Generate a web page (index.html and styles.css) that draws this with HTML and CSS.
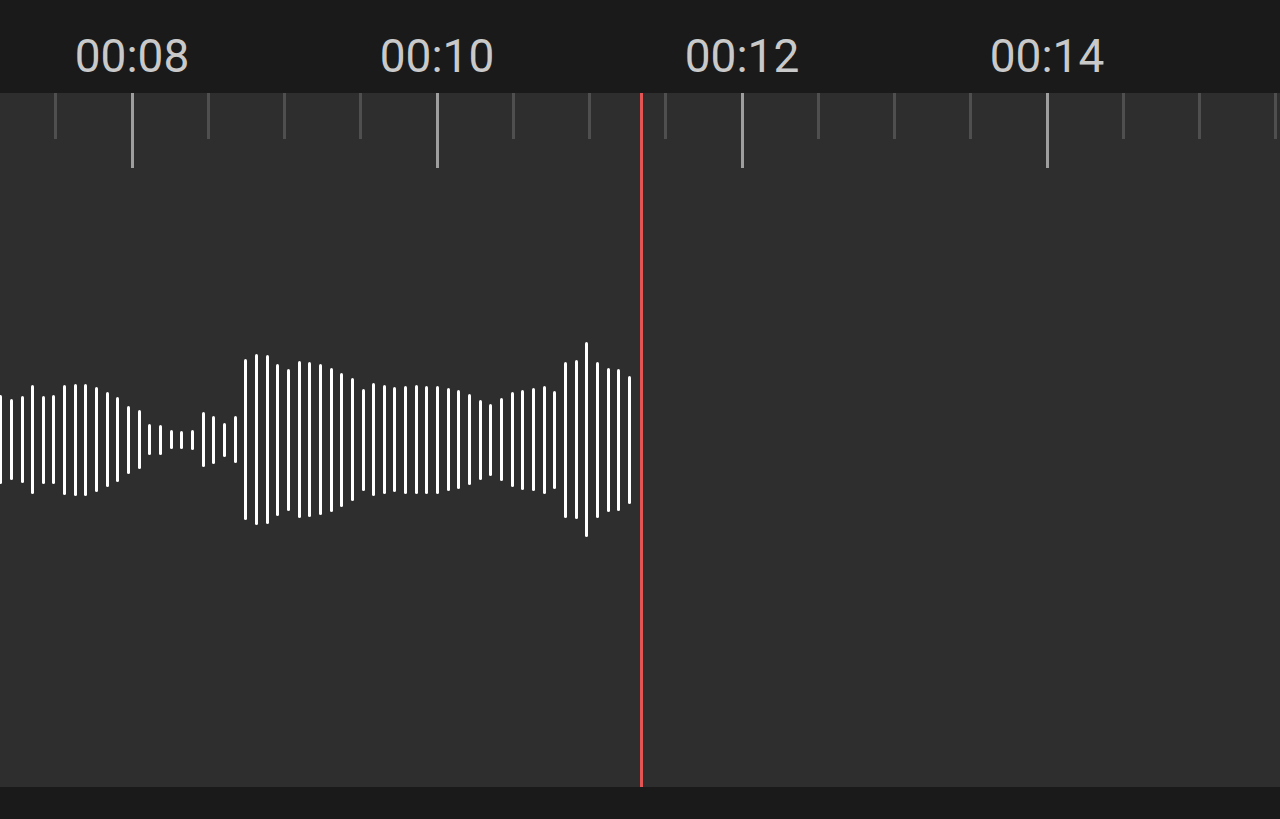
FILE: index.html
```html
<!DOCTYPE html>
<html lang="en">
<head>
    <meta charset="UTF-8">
    <meta name="viewport" content="width=device-width, initial-scale=1.0">
    <title>Recorder Timeline</title>
    <link rel="stylesheet" href="styles.css">
</head>
<body>

<div class="time-header">
    <span class="time-label">00:08</span>
    <span class="time-label">00:10</span>
    <span class="time-label">00:12</span>
    <span class="time-label">00:14</span>
</div>

<div class="timeline">
    <div class="ruler">
        <div class="tick-cell"><span class="tick"></span></div>
        <div class="tick-cell"><span class="tick major"></span></div>
        <div class="tick-cell"><span class="tick"></span></div>
        <div class="tick-cell"><span class="tick"></span></div>
        <div class="tick-cell"><span class="tick"></span></div>
        <div class="tick-cell"><span class="tick major"></span></div>
        <div class="tick-cell"><span class="tick"></span></div>
        <div class="tick-cell"><span class="tick"></span></div>
        <div class="tick-cell"><span class="tick"></span></div>
        <div class="tick-cell"><span class="tick major"></span></div>
        <div class="tick-cell"><span class="tick"></span></div>
        <div class="tick-cell"><span class="tick"></span></div>
        <div class="tick-cell"><span class="tick"></span></div>
        <div class="tick-cell"><span class="tick major"></span></div>
        <div class="tick-cell"><span class="tick"></span></div>
        <div class="tick-cell"><span class="tick"></span></div>
        <div class="tick-cell"><span class="tick"></span></div>
    </div>

    <!-- recorded amplitude, one bar per sample -->
    <div class="waveform">
        <span class="bar" style="height:89px"></span>
        <span class="bar" style="height:81px"></span>
        <span class="bar" style="height:87px"></span>
        <span class="bar" style="height:109px"></span>
        <span class="bar" style="height:88px"></span>
        <span class="bar" style="height:89px"></span>
        <span class="bar" style="height:110px"></span>
        <span class="bar" style="height:112px"></span>
        <span class="bar" style="height:112px"></span>
        <span class="bar" style="height:105px"></span>
        <span class="bar" style="height:95px"></span>
        <span class="bar" style="height:85px"></span>
        <span class="bar" style="height:68px"></span>
        <span class="bar" style="height:59px"></span>
        <span class="bar" style="height:31px"></span>
        <span class="bar" style="height:30px"></span>
        <span class="bar" style="height:19px"></span>
        <span class="bar" style="height:18px"></span>
        <span class="bar" style="height:20px"></span>
        <span class="bar" style="height:55px"></span>
        <span class="bar" style="height:48px"></span>
        <span class="bar" style="height:34px"></span>
        <span class="bar" style="height:47px"></span>
        <span class="bar" style="height:161px"></span>
        <span class="bar" style="height:171px"></span>
        <span class="bar" style="height:169px"></span>
        <span class="bar" style="height:152px"></span>
        <span class="bar" style="height:142px"></span>
        <span class="bar" style="height:157px"></span>
        <span class="bar" style="height:155px"></span>
        <span class="bar" style="height:151px"></span>
        <span class="bar" style="height:144px"></span>
        <span class="bar" style="height:134px"></span>
        <span class="bar" style="height:123px"></span>
        <span class="bar" style="height:102px"></span>
        <span class="bar" style="height:113px"></span>
        <span class="bar" style="height:109px"></span>
        <span class="bar" style="height:105px"></span>
        <span class="bar" style="height:108px"></span>
        <span class="bar" style="height:109px"></span>
        <span class="bar" style="height:108px"></span>
        <span class="bar" style="height:108px"></span>
        <span class="bar" style="height:103px"></span>
        <span class="bar" style="height:99px"></span>
        <span class="bar" style="height:91px"></span>
        <span class="bar" style="height:80px"></span>
        <span class="bar" style="height:72px"></span>
        <span class="bar" style="height:83px"></span>
        <span class="bar" style="height:95px"></span>
        <span class="bar" style="height:100px"></span>
        <span class="bar" style="height:103px"></span>
        <span class="bar" style="height:108px"></span>
        <span class="bar" style="height:98px"></span>
        <span class="bar" style="height:156px"></span>
        <span class="bar" style="height:159px"></span>
        <span class="bar" style="height:195px"></span>
        <span class="bar" style="height:156px"></span>
        <span class="bar" style="height:144px"></span>
        <span class="bar" style="height:142px"></span>
        <span class="bar" style="height:128px"></span>
    </div>

    <div class="playhead"></div>
</div>

<div class="bottom-bar"></div>

</body>
</html>
```

FILE: styles.css
```css
html, body {
    margin: 0;
    height: 100%;
}

body {
    display: flex;
    flex-direction: column;
    font-family: Roboto, "Liberation Sans", sans-serif;
    background-color: #2e2e2e;
    overflow: hidden;
}

.time-header {
    display: flex;
    gap: 152.5px;
    height: 93px;
    padding-left: 55.75px;
    box-sizing: border-box;
    background-color: #1a1a1a;
    flex-shrink: 0;
}

.time-label {
    width: 152.5px;
    flex-shrink: 0;
    text-align: center;
    font-size: 46px;
    line-height: 46px;
    padding-top: 33px;
    color: #c9c9c9;
}

.timeline {
    position: relative;
    flex: 1;
    overflow: hidden;
    background-color: #2e2e2e;
}

.ruler {
    display: flex;
    padding-left: 17.625px;
    height: 75px;
}

.tick-cell {
    width: 76.25px;
    flex-shrink: 0;
    display: flex;
    justify-content: center;
}

.tick {
    width: 3px;
    height: 46px;
    background-color: #4f4f4f;
}

.tick.major {
    height: 75px;
    background-color: #9e9e9e;
}

.waveform {
    display: flex;
    align-items: center;
    gap: 7.667px;
    height: 200px;
    margin-top: 171.5px;
    margin-left: -0.8px;
}

.bar {
    width: 3px;
    flex-shrink: 0;
    border-radius: 1.5px;
    background-color: #ffffff;
}

.playhead {
    position: absolute;
    top: 0;
    bottom: 0;
    left: 640px;
    width: 3px;
    background-color: #e35454;
}

.bottom-bar {
    height: 32px;
    flex-shrink: 0;
    background-color: #1a1a1a;
}
```
